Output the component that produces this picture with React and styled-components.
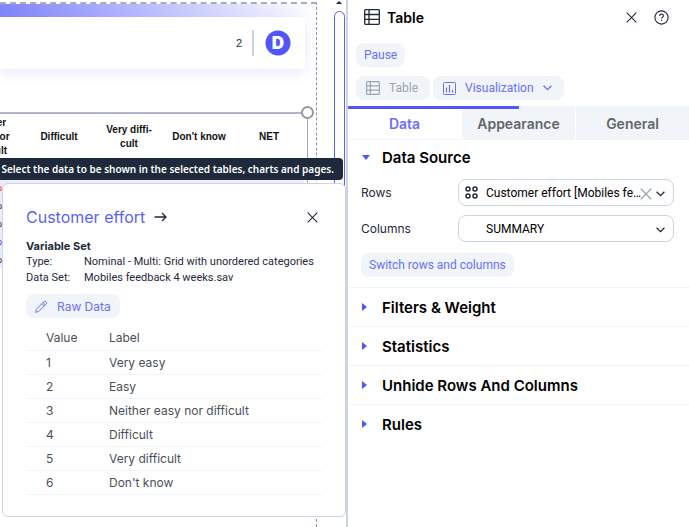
import React, { useState } from 'react'
import styled, { createGlobalStyle } from 'styled-components'

const columns = ['Difficult', 'Very diffi-cult', "Don't know", 'NET']

const rowColors = ['#111', 'red', '#111', '#111', '#22f', '#111']

const labels = ['Very easy', 'Easy', 'Neither easy nor difficult', 'Difficult', 'Very difficult', "Don't know"]

const tabs = ['Data', 'Appearance', 'General']

const sections = ['Filters & Weight', 'Statistics', 'Unhide Rows And Columns', 'Rules']

const TableIcon = ({ size = 16 }) => (
  <svg width={size} height={size} viewBox="0 0 16 16" fill="none" stroke="currentColor" strokeWidth="1.3" aria-hidden="true">
    <rect x="0.7" y="0.7" width="14.6" height="14.6" rx="0.8" />
    <path d="M5 1v14M1 5.5h14M1 10.4h14" />
  </svg>
)

const ChartIcon = () => (
  <svg width="13" height="13" viewBox="0 0 13 13" fill="none" stroke="currentColor" aria-hidden="true">
    <rect x="0.5" y="0.5" width="12" height="12" rx="1" />
    <path d="M3.5 5.5v5M6.5 3v7.5M9.5 8v2.5" strokeWidth="1.2" />
  </svg>
)

const CloseIcon = ({ size = 11 }) => (
  <svg width={size} height={size} viewBox="0 0 11 11" fill="none" stroke="currentColor" strokeWidth="1.1" aria-hidden="true">
    <path d="M0.7 0.7l9.6 9.6M10.3 0.7L0.7 10.3" />
  </svg>
)

const HelpIcon = () => (
  <svg width="15" height="15" viewBox="0 0 15 15" fill="none" stroke="currentColor" strokeWidth="1.1" aria-hidden="true">
    <circle cx="7.5" cy="7.5" r="6.6" />
    <path d="M5.6 6c0-1.2.8-1.9 1.9-1.9s1.9.7 1.9 1.7c0 1.4-1.8 1.4-1.8 2.8M7.6 9.8v1.2" />
  </svg>
)

const ArrowIcon = () => (
  <svg width="13" height="10" viewBox="0 0 13 10" fill="none" stroke="currentColor" strokeWidth="1.3" aria-hidden="true">
    <path d="M0.5 5h11.5M8 1l4 4-4 4" />
  </svg>
)

const PencilIcon = () => (
  <svg width="13" height="13" viewBox="0 0 13 13" fill="none" stroke="currentColor" aria-hidden="true">
    <path d="M1.3 9.3l7.9-7.9c.9-.9 3.2 1.1 2.3 2.2l-7.9 7.9-2.9.8zM8.2 2.5l2.3 2.3M7 3.7L9.3 6" />
  </svg>
)

const GridIcon = () => (
  <svg width="13" height="13" viewBox="0 0 13 13" fill="none" stroke="currentColor" strokeWidth="1.5" aria-hidden="true">
    <circle cx="3" cy="3" r="2" />
    <circle cx="10" cy="3" r="2" />
    <circle cx="3" cy="10" r="2" />
    <circle cx="10" cy="10" r="2" />
  </svg>
)

const ChevronIcon = () => (
  <svg width="9" height="6" viewBox="0 0 9 6" fill="none" stroke="currentColor" strokeWidth="1.3" aria-hidden="true">
    <path d="M0.6 0.8l3.9 3.9L8.4 0.8" />
  </svg>
)

const App = () => {
  const [tab, setTab] = useState('Data')
  const [popoverOpen, setPopoverOpen] = useState(true)

  return (
    <Layout>
      <GlobalStyle />
      <Canvas>
        <Page>
          <Banner />
          <PageHeader>
            <span>2</span>
            <Logo>D</Logo>
          </PageHeader>
          <Selection>
            <Handle />
            <CrossTab>
              <thead>
                <tr>
                  <th>Neither easy nor difficult</th>
                  {columns.map((c) => <th key={c}>{c}</th>)}
                </tr>
              </thead>
              <tbody>
                {rowColors.map((color, i) => (
                  <ValueRow key={i} $color={color}>
                    <td>100%</td>
                    <td /><td /><td /><td />
                  </ValueRow>
                ))}
              </tbody>
            </CrossTab>
          </Selection>
        </Page>
        <Scrollbar>
          <ScrollArrow />
          <Thumb />
        </Scrollbar>
        <Tooltip role="tooltip">Select the data to be shown in the selected tables, charts and pages.</Tooltip>
        {popoverOpen && (
          <Popover>
            <PopoverHead>
              <h2>Customer effort</h2>
              <ArrowIcon />
              <IconButton aria-label="Close details" onClick={() => setPopoverOpen(false)}><CloseIcon /></IconButton>
            </PopoverHead>
            <Meta>
              <h3>Variable Set</h3>
              <dl>
                <dt>Type:</dt>
                <dd>Nominal - Multi: Grid with unordered categories</dd>
                <dt>Data Set:</dt>
                <dd>Mobiles feedback 4 weeks.sav</dd>
              </dl>
            </Meta>
            <RawButton><PencilIcon />Raw Data</RawButton>
            <LabelTable>
              <thead>
                <tr><th>Value</th><th>Label</th></tr>
              </thead>
              <tbody>
                {labels.map((label, i) => (
                  <tr key={label}><td>{i + 1}</td><td>{label}</td></tr>
                ))}
              </tbody>
            </LabelTable>
          </Popover>
        )}
      </Canvas>

      <Panel>
        <PanelHead>
          <TableIcon />
          <h1>Table</h1>
          <IconButton aria-label="Close"><CloseIcon /></IconButton>
          <IconButton aria-label="Help"><HelpIcon /></IconButton>
        </PanelHead>
        <Toolbar>
          <PillButton>Pause</PillButton>
        </Toolbar>
        <Toolbar>
          <PillButton $wide disabled><TableIcon size={14} />Table</PillButton>
          <PillButton $wide><ChartIcon />Visualization<ChevronIcon /></PillButton>
        </Toolbar>
        <Tabs role="tablist">
          {tabs.map((t) => (
            <Tab key={t} role="tab" aria-selected={tab === t} $active={tab === t} onClick={() => setTab(t)}>{t}</Tab>
          ))}
        </Tabs>
        <SectionTitle aria-expanded="true"><Caret $open />Data Source</SectionTitle>
        <Fields>
          <label htmlFor="rows">Rows</label>
          <SelectBox>
            <GridIcon />
            <Select id="rows" defaultValue="effort" $clearable>
              <option value="effort">Customer effort [Mobiles feedback 4 weeks.sav]</option>
            </Select>
            <ClearButton aria-label="Clear rows"><CloseIcon size={12} /></ClearButton>
            <ChevronIcon />
          </SelectBox>
          <label htmlFor="columns">Columns</label>
          <SelectBox>
            <Select id="columns" defaultValue="summary">
              <option value="summary">SUMMARY</option>
            </Select>
            <ChevronIcon />
          </SelectBox>
          <PillButton>Switch rows and columns</PillButton>
        </Fields>
        {sections.map((s) => (
          <SectionTitle key={s} $divided aria-expanded="false"><Caret />{s}</SectionTitle>
        ))}
      </Panel>
    </Layout>
  )
}

export default App

const GlobalStyle = createGlobalStyle`
  * {
    box-sizing: border-box;
  }
  body {
    margin: 0;
    background: #fff;
    color: #1e293b;
    font-family: Inter, "Liberation Sans", sans-serif;
    font-size: 12px;
  }
  h1, h2, h3, dl, dd {
    margin: 0;
  }
  button, select {
    font: inherit;
    border: 0;
    padding: 0;
    background: none;
  }
  button {
    cursor: pointer;
  }
`

const Layout = styled.div`
  display: flex;
  min-height: 100vh;
`

const Canvas = styled.main`
  position: relative;
  flex: 1;
  min-width: 0;
  display: flex;
  overflow: hidden;
`

const Page = styled.section`
  position: relative;
  flex: 1;
  min-width: 0;
  margin: 2px 16px 0 0;
  border-top: 2px dashed #a3aec0;
  border-right: 1px dashed #8492a8;
  font-family: "Liberation Sans", Arial, sans-serif;
  font-size: 10px;
`

const Banner = styled.div`
  height: 13px;
  background: linear-gradient(90deg, #8284fb, #c5c8fd 55%, #fff);
`

const PageHeader = styled.header`
  display: flex;
  align-items: center;
  justify-content: flex-end;
  gap: 10px;
  height: 52px;
  margin-right: 11px;
  padding-right: 14px;
  background: #fff;
  box-shadow: 0 3px 12px #6366f126;
  font-size: 11px;
`

const Logo = styled.div`
  display: flex;
  align-items: center;
  padding-left: 11px;
  border-left: 2px solid #cbd5e1;
  height: 26px;
  color: #fff;
  font: 900 17px/26px Inter, sans-serif;
  background: radial-gradient(circle 13px at calc(100% - 13px) 50%, #5255fa 12px, transparent 13px);
  justify-content: center;
  width: 39px;
`

const Selection = styled.div`
  position: relative;
  display: flex;
  justify-content: flex-end;
  margin: 43px 8px 0 0;
  padding-right: 3px;
  border-top: 2px solid #b5b5cc;
  border-right: 1px solid #aaa;
`

const Handle = styled.span`
  position: absolute;
  top: -8px;
  right: -7px;
  width: 13px;
  height: 13px;
  border: 2px solid #999;
  border-radius: 50%;
  background: #fff;
`

const CrossTab = styled.table`
  flex: none;
  table-layout: fixed;
  width: 350px;
  border-collapse: collapse;
  color: #111;
  text-align: center;
  th {
    height: 46px;
    padding: 0 7px;
    font-weight: 700;
    line-height: 14px;
  }
  td {
    height: 18px;
    padding: 0;
  }
`

const ValueRow = styled.tr`
  background: #ececfa;
  color: ${(p) => p.$color};
`

const Scrollbar = styled.div`
  display: flex;
  flex-direction: column;
  align-items: center;
  gap: 7px;
  width: 13px;
  padding-right: 1px;
`

const ScrollArrow = styled.span`
  margin-top: 1px;
  border: 3px solid transparent;
  border-top: 0;
  border-bottom-color: #1e293b;
`

const Thumb = styled.div`
  width: 11px;
  height: 60%;
  border: 1px solid #5b5ff5;
  border-radius: 6px;
`

const Tooltip = styled.div`
  position: absolute;
  top: 158px;
  right: 3px;
  padding: 0 9px;
  border-radius: 4px;
  background: #1e293b;
  color: #fff;
  font: 600 10px/22px "Noto Sans", sans-serif;
  white-space: nowrap;
`

const Popover = styled.section`
  position: absolute;
  top: 183px;
  left: 2px;
  right: 0;
  padding: 23px 23px 21px;
  border: 1px solid #cfd2e2;
  border-radius: 6px;
  background: #fff;
`

const PopoverHead = styled.div`
  display: flex;
  align-items: center;
  gap: 9px;
  padding-right: 4px;
  h2 {
    color: #5b5ff5;
    font-size: 16px;
    font-weight: 400;
    line-height: 20px;
  }
  button {
    margin-left: auto;
  }
`

const IconButton = styled.button`
  display: flex;
  color: #1e293b;
`

const Meta = styled.div`
  margin-top: 11px;
  font-family: Roboto, sans-serif;
  font-size: 11px;
  line-height: 16px;
  h3 {
    font-family: Inter, sans-serif;
    font-size: 11px;
    font-weight: 700;
  }
  dl {
    display: grid;
    grid-template-columns: 58px 1fr;
    white-space: nowrap;
  }
`

const PillButton = styled.button`
  display: flex;
  align-items: center;
  gap: 9px;
  height: 24px;
  padding: ${(p) => (p.$wide ? '0 12px 0 10px' : '0 8px')};
  border-radius: 8px;
  background: #f1f5f9;
  color: #6c6ff6;
  font-family: Roboto, sans-serif;
  font-size: 12px;
  &:disabled {
    color: #9ca3af;
    cursor: default;
  }
`

const RawButton = styled(PillButton)`
  margin-top: 8px;
  padding: 0 9px;
  font-family: Inter, sans-serif;
`

const LabelTable = styled.table`
  width: 100%;
  margin-top: 8px;
  border-collapse: collapse;
  color: #4b4f58;
  text-align: left;
  th, td {
    height: 24px;
    padding: 0;
    border-bottom: 1px solid #f1f5f9;
    font-weight: 400;
  }
  th:first-child, td:first-child {
    width: 83px;
    padding-left: 20px;
  }
`

const Panel = styled.aside`
  flex: 0 0 343px;
  border-left: 2px solid #cbd5e1;
  background: #fff;
`

const PanelHead = styled.header`
  display: flex;
  align-items: center;
  height: 34px;
  padding: 0 20px 0 16px;
  h1 {
    flex: 1;
    margin-left: 7px;
    color: #000;
    font-size: 14px;
    font-weight: 600;
  }
  button + button {
    margin-left: 17px;
  }
`

const Toolbar = styled.div`
  display: flex;
  gap: 3px;
  padding: 9px 8px 0;
`

const Tabs = styled.div`
  position: relative;
  display: flex;
  gap: 1px;
  margin-top: 6px;
  border-bottom: 1px solid #f1f5f9;
  &::before {
    content: "";
    position: absolute;
    top: 0;
    left: 0;
    width: 50%;
    height: 3px;
    background: #5255fa;
  }
`

const Tab = styled.button`
  flex: 1;
  height: 33px;
  padding-top: 2px;
  background: ${(p) => (p.$active ? '#fff' : '#f1f5f9')};
  color: ${(p) => (p.$active ? '#6c6ff6' : '#64666b')};
  font-size: 14px;
  font-weight: 600;
`

const SectionTitle = styled.button`
  display: flex;
  align-items: center;
  width: 100%;
  height: ${(p) => (p.$divided ? 39 : 35)}px;
  padding-left: 14px;
  border-top: ${(p) => (p.$divided ? '1px solid #f1f5f9' : 0)};
  color: #000;
  font-size: 15px;
  font-weight: 600;
`

const Caret = styled.span`
  width: 20px;
  &::before {
    content: "";
    display: block;
    width: ${(p) => (p.$open ? 8 : 5)}px;
    height: ${(p) => (p.$open ? 5 : 8)}px;
    background: #5255fa;
    clip-path: ${(p) => (p.$open ? 'polygon(0 0, 100% 0, 50% 100%)' : 'polygon(0 0, 100% 50%, 0 100%)')};
  }
`

const Fields = styled.div`
  display: grid;
  grid-template-columns: 97px 1fr;
  align-items: center;
  row-gap: 9px;
  padding: 4px 15px 10px 13px;
  > button {
    grid-column: 1 / -1;
    justify-self: start;
    margin-top: 2px;
  }
`

const SelectBox = styled.div`
  position: relative;
  height: 27px;
  border: 1px solid #cbd5e1;
  border-radius: 8px;
  color: #1e293b;
  > svg {
    position: absolute;
    top: 6px;
    left: 6px;
    pointer-events: none;
  }
  > svg:last-child {
    top: 11px;
    left: auto;
    right: 8px;
  }
`

const Select = styled.select`
  width: 100%;
  height: 100%;
  padding: 0 ${(p) => (p.$clearable ? 28 : 22)}px 0 27px;
  appearance: none;
  color: #000;
  font-family: Roboto, sans-serif;
  font-size: 12px;
  text-overflow: ellipsis;
  outline: 0;
`

const ClearButton = styled.button`
  position: absolute;
  top: 8px;
  right: 21px;
  display: flex;
  color: #94a3b8;
`
